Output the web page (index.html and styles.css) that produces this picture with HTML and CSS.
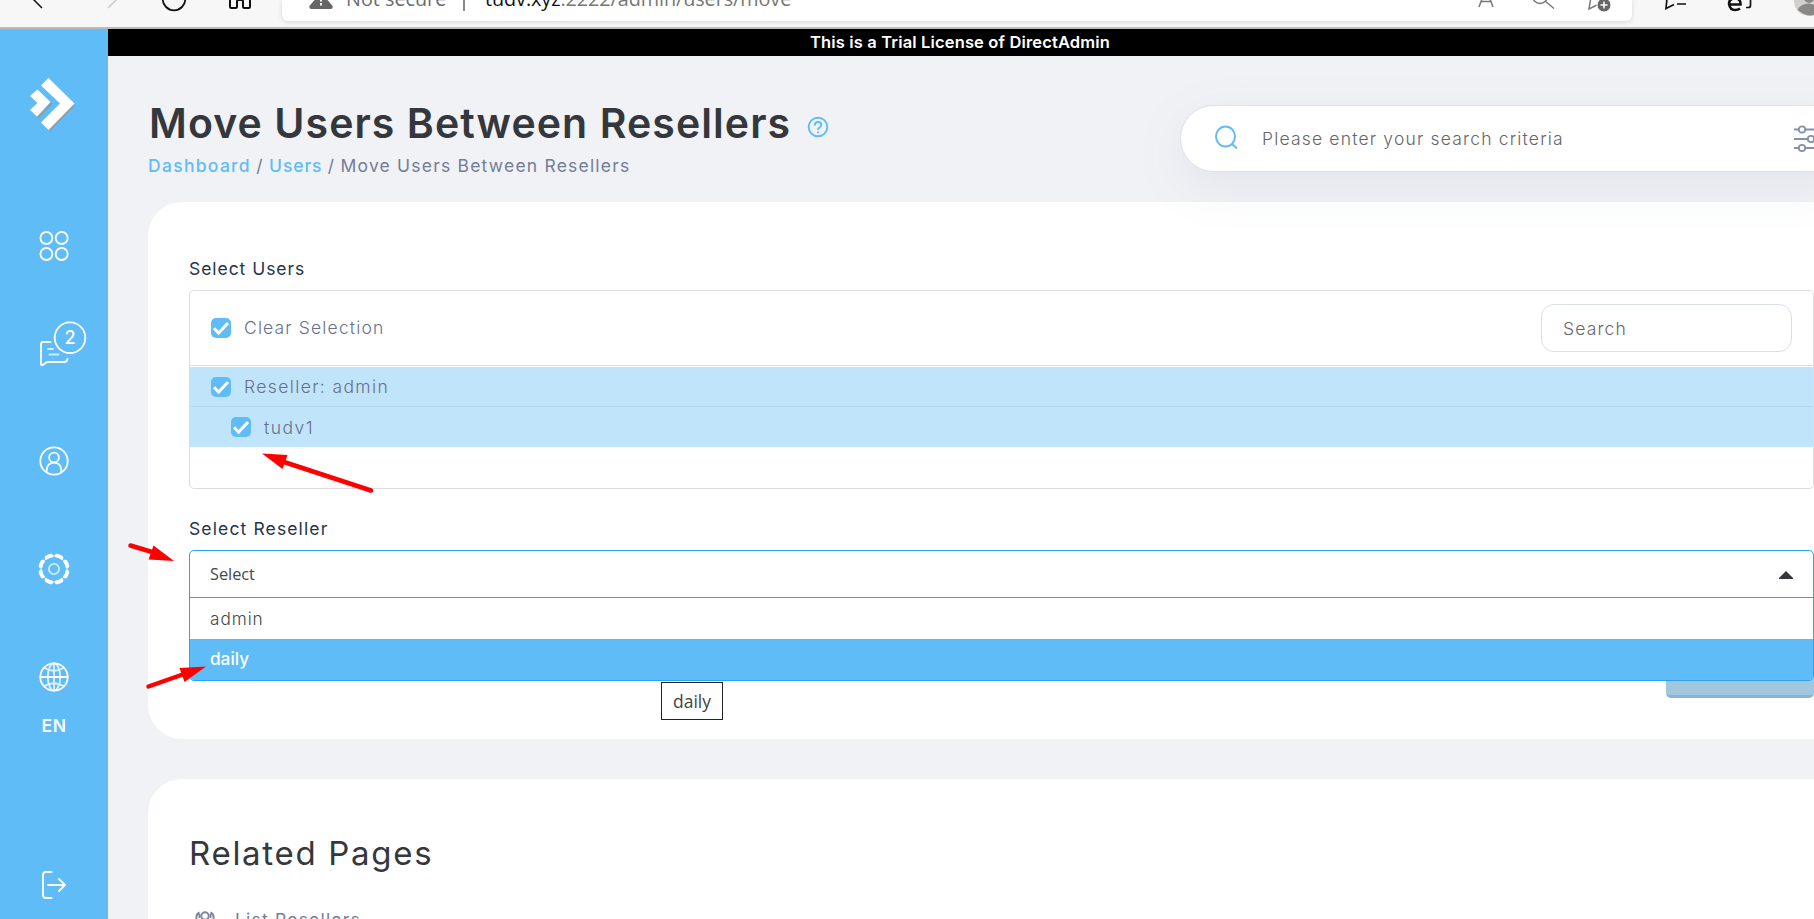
FILE: index.html
```html
<!DOCTYPE html>
<html lang="en">
<head>
<meta charset="utf-8">
<title>Move Users Between Resellers</title>
<link rel="stylesheet" href="styles.css">
</head>
<body>
<div class="browser">
  <svg class="browser-nav" width="282" height="27" viewBox="0 0 282 27" fill="none" stroke-width="1.5">
    <path d="M32 -2L42 8" stroke="#111"/>
    <path d="M118 -2L108 8" stroke="#ccc"/>
    <circle cx="174" cy="-1" r="11.3" stroke="#111" stroke-width="1.8"/>
    <path d="M230 -6V6.5Q230 8 231.500 8H235.500Q237 8 237 6.500V1.500Q237 0 238.500 0H241.500Q243 0 243 1.500V6.500Q243 8 244.500 8H248.500Q250 8 250 6.500V-6" stroke="#111" stroke-width="2"/>
  </svg>
  <div class="address">
    <svg class="warn" width="24" height="9" viewBox="0 0 24 9"><path d="M5.500 0H18.500L23.600 6Q24 9 21.500 9H2.500Q0 9 .4 6Z" fill="#666"/><path d="M12 0V1.500M12 3V5.500" stroke="#fff" stroke-width="2"/></svg>
    <span class="insecure">Not secure</span>
    <span class="divider"></span>
    <span class="url"><b>tudv.xyz</b>:2222/admin/users/move</span>
    <svg class="address-icons" width="140" height="21" viewBox="0 0 140 21" fill="none" stroke="#777" stroke-width="1.5">
      <path d="M3 7L9-9H11L17 7M5 1.500H15"/>
      <circle cx="64" cy="-4" r="7.500"/><path d="M69 1L78 8.500"/>
      <path d="M115-3L113 9L121 5"/><circle cx="128" cy="5" r="7" fill="#666" stroke="#fff" stroke-width="1"/><path d="M128 1.500V8.500M124.500 5H131.500" stroke="#fff"/>
    </svg>
  </div>
  <svg class="browser-tools" width="182" height="27" viewBox="0 0 182 27" fill="none" stroke="#111" stroke-width="1.700">
    <path d="M35-2L34 8.500L42 4.500M45 4H54"/>
    <path d="M114 7.500H116.500Q118.500 7.500 118.500 5.500V-2"/>
    <path d="M98 4.500H108.500Q109-1.500 102.500-1.500Q97-1.500 97 4Q98 10 103 10Q106 10 108 8.500" stroke-width="2.500"/>
    <circle cx="177" cy="1" r="15" fill="#d2d0ce" stroke="none"/><circle cx="177" cy="-2" r="5" fill="#8a8886" stroke="none"/><path d="M165.500 10Q168 4 177 3.500Q184 4 189 10Q180 21 165.500 10Z" fill="#8a8886" stroke="none"/>
  </svg>
</div>
<div class="app">
  <nav class="sidebar">
    <svg class="logo" width="48" height="56" viewBox="0 0 48 56">
      <path d="M13.500 46.500L34 29L46.500 28L20.500 54.500Z M8 41L22 25L23.500 27L9 42Z" fill="#999"/>
      <path d="M19.500 1L45.500 26.500L19.500 53L12 45.500L31 26.500L12 8.500Z M8.500 12.500L21.500 25L8 39.500L1 33L8.500 26L1 19Z" fill="#fff"/>
    </svg>
    <svg class="ico ico-grid" width="32" height="32" viewBox="0 0 32 32"><circle cx="8.400" cy="8" r="6"/><circle cx="23.700" cy="8" r="6"/><circle cx="8.400" cy="24" r="6"/><circle cx="23.700" cy="24" r="6"/></svg>
    <div class="messages">
      <svg class="ico" width="50" height="48" viewBox="0 0 50 48"><path d="M12.500 21H5Q3 21 3 23V42.500Q3 45.500 5.500 43.500L9 41H26Q29 41 29.500 38"/><path d="M10 28H15M11.500 33.500H20.500" opacity=".7" stroke-width="1.900"/><circle cx="32" cy="16.700" r="15.300"/></svg>
      <span class="count">2</span>
    </div>
    <svg class="ico ico-user" width="32" height="32" viewBox="0 0 32 32"><circle cx="16" cy="16" r="13.700"/><circle cx="16" cy="12.500" r="4.900"/><path d="M8.700 27V24.500Q9.500 17.600 16 17.600T23.300 24.500V27"/></svg>
    <svg class="ico ico-gear" width="34" height="34" viewBox="0 0 34 34"><circle cx="17" cy="17" r="13.700" pathLength="80" stroke-width="3.800" stroke-linecap="round" stroke-dasharray="4.500 5.500" stroke-dashoffset="-2.750"/><circle cx="17" cy="17" r="13" pathLength="80" stroke-width="2.200" stroke-linecap="butt" stroke-dasharray="9 1" stroke-dashoffset="-.5"/><circle cx="17" cy="17" r="5.100" opacity=".7"/></svg>
    <svg class="ico ico-globe" width="32" height="32" viewBox="0 0 32 32"><circle cx="16" cy="16" r="13.700"/><g opacity=".8"><ellipse cx="16" cy="16" rx="6.200" ry="13.700"/><path d="M16 2.500V29.500M6.500 7Q16 12.500 25.500 7M6.500 25Q16 19.500 25.500 25"/></g><path d="M2.500 16H29.500"/></svg>
    <span class="lang">EN</span>
    <svg class="ico ico-exit" width="28" height="30" viewBox="0 0 28 30"><path d="M11.500 2H6Q3 2 3 5V25Q3 28 6 28H11.500M8 15H25M19 9L25 15L19 21"/></svg>
  </nav>
  <main class="main">
    <div class="license">This is a Trial License of DirectAdmin</div>
    <header class="header">
      <div class="heading">
        <h1 class="title"><span>Move Users Between Resellers</span>
          <svg width="22" height="22" viewBox="0 0 22 22" fill="none" stroke="#60bcf6" stroke-width="1.900"><circle cx="11" cy="11" r="9.300"/><path d="M7.700 9.500Q7.700 6 11 6T14.300 9Q14.300 10.200 12.800 11.200Q11 12.300 11 14M11 15.500V17.200"/></svg>
        </h1>
        <div class="crumbs"><a class="home">Dashboard</a><i>/</i><a>Users</a><i>/</i><span>Move Users Between Resellers</span></div>
      </div>
      <div class="search">
        <svg class="lens" width="24" height="24" viewBox="0 0 24 24" fill="none" stroke="#60bcf6" stroke-width="2"><ellipse cx="10.500" cy="11.500" rx="9.500" ry="10"/><path d="M16.500 18.500L22 23.500"/></svg>
        <span class="search-text">Please enter your search criteria</span>
        <svg class="filter" width="30" height="28" viewBox="0 0 30 28" fill="none" stroke="#8690ac" stroke-width="1.800"><path d="M0 4.500H5M11 4.500H28M0 14H14M20 14H28M0 23H5M11 23H28"/><circle cx="8" cy="4.500" r="3.200"/><circle cx="17" cy="14" r="3.200"/><circle cx="8" cy="23" r="3.200"/></svg>
      </div>
    </header>
    <section class="card form">
      <div class="label label-users">Select Users</div>
      <div class="list">
        <div class="list-head">
          <svg class="check" viewBox="0 0 20 20"><rect width="20" height="20" rx="5"/><path d="M3 10.200L7.600 15L17 5"/></svg>
          <span class="clear">Clear Selection</span>
          <div class="filter-input">Search</div>
        </div>
        <div class="row"><svg class="check" viewBox="0 0 20 20"><rect width="20" height="20" rx="5"/><path d="M3 10.200L7.600 15L17 5"/></svg><span class="reseller">Reseller: admin</span></div>
        <div class="row child"><svg class="check" viewBox="0 0 20 20"><rect width="20" height="20" rx="5"/><path d="M3 10.200L7.600 15L17 5"/></svg><span class="user">tudv1</span></div>
      </div>
      <div class="label label-reseller">Select Reseller</div>
      <div class="select">
        <div class="select-value"><span>Select</span><svg width="14" height="8" viewBox="0 0 14 8"><path d="M7 0L14 7V8H0V7Z" fill="#34383c"/></svg></div>
        <div class="option"><span class="opt-admin">admin</span></div>
        <div class="option active"><span class="opt-daily">daily</span></div>
        <div class="tooltip">daily</div>
      </div>
      <div class="button"></div>
    </section>
    <section class="card related">
      <h2 class="related-title">Related Pages</h2>
      <div class="link">
        <svg width="20" height="20" viewBox="0 0 20 20" fill="none" stroke="#7c86a2" stroke-width="1.900"><circle cx="10" cy="5" r="3.700"/><path d="M4.500 1.500Q.8 3 1.500 8M15.500 1.500Q19.200 3 18.500 8M4.500 3V7M15.500 3V7M3 17Q4 10 10 10T17 17"/></svg>
        <span>List Resellers</span>
      </div>
    </section>
  </main>
</div>
<svg class="arrows" width="300" height="260" viewBox="100 440 300 260" stroke="#f00" fill="#f00" stroke-width="4.500" stroke-linecap="round">
  <path d="M371 490.500L284 462"/><path d="M262 453.500L287.500 455L282.500 469Z" stroke="none"/>
  <path d="M130.500 545.500L152 552"/><path d="M174 561L153.500 545.500L148.500 559.500Z" stroke="none"/>
  <path d="M148.500 686.500L184 674"/><path d="M206 666.500L179.500 668L184.500 682Z" stroke="none"/>
</svg>
</body>
</html>
```
FILE: styles.css
```css
* { box-sizing: border-box; }
html { overflow: hidden; }
body { margin: 0; width: 1814px; height: 919px; overflow: hidden; position: relative; font-family: Inter, "Liberation Sans", sans-serif; background: #f1f2f6; white-space: nowrap; }
svg { display: block; flex: none; }
.browser { height: 29px; display: flex; background: #f7f7f7; border-bottom: 2px solid #bbb; overflow: hidden; font-family: "Open Sans", "Noto Sans", sans-serif; font-size: 19.800px; }
.address { width: 1350px; height: 21px; display: flex; background: #fff; border-radius: 0 0 6px 6px; box-shadow: 0 1px 5px #0002; padding-left: 27px; line-height: 20px; }
.insecure { margin-left: 13px; margin-top: -11px; width: 117px; color: #6b6b6b; }
.divider { width: 2px; height: 11px; background: #8a8a8a; }
.url { margin: -11px 0 0 20px; flex: 1; color: #767676; letter-spacing: -.06px; }
.url b { font-weight: 400; color: #111; }
.address-icons { margin-right: 16px; }
.app { height: 890px; display: flex; overflow: hidden; }
.sidebar { width: 108px; flex: none; background: #60bcf6; display: flex; flex-direction: column; align-items: center; }
.logo { margin: 48px 0 0 -2px; }
.ico { fill: none; stroke: #fff; stroke-width: 1.8; stroke-linecap: round; }
.ico-grid { margin-top: 97px; }
.messages { position: relative; margin: 59px 0 0 18px; }
.count { position: absolute; left: 17px; top: 1px; width: 30px; text-align: center; line-height: 32px; font-size: 18px; font-weight: 500; color: #fff; }
.ico-user { margin-top: 76px; }
.ico-gear { margin-top: 75px; }
.ico-globe { margin-top: 75px; }
.lang { margin-top: 23px; height: 20px; line-height: 20px; font-size: 17.500px; font-weight: 600; color: #fff; letter-spacing: .5px; }
.ico-exit { margin-top: 134px; }
.main { width: 1747px; flex: none; overflow: hidden; }
.license { width: 1706px; height: 27px; line-height: 27px; background: #000; color: #fff; text-align: center; font-size: 16.500px; font-weight: 600; letter-spacing: .15px; text-indent: -2px; }
.header { height: 146px; padding-left: 41px; display: flex; justify-content: space-between; }
.heading { padding-top: 42px; }
.title { margin: 0; height: 50px; line-height: 50px; font-size: 41px; font-weight: 600; color: #34383d; display: flex; gap: 16px; letter-spacing: 1.080px; }
.title svg { margin-top: 18px; }
.crumbs { display: flex; height: 24px; line-height: 24px; margin-top: 6px; margin-left: -1px; font-size: 17.500px; color: #747d97; letter-spacing: 1.200px; }
.crumbs a { color: #60bcf6; font-weight: 500; letter-spacing: .9px; }
.crumbs .home { letter-spacing: 1.300px; }
.crumbs i { font-style: normal; margin: 0 5.300px; }
.search { position: relative; margin-top: 49px; width: 675px; height: 67px; border: 1px solid #dce1ea; border-radius: 34px; background: #fff; box-shadow: 0 15px 50px rgba(100,120,150,.1); display: flex; align-items: center; padding-left: 34px; }
.lens { margin-top: -3px; }
.search-text { margin-left: 23px; flex: 1; font-size: 17.500px; font-weight: 300; color: #666; letter-spacing: 1.180px; }
.filter { margin-right: 30px; }
.card { margin-left: 40px; background: #fff; border-radius: 34px; padding-left: 41px; padding-right: 41px; }
.form { height: 537px; padding-top: 55px; }
.label { height: 24px; line-height: 24px; font-size: 17.500px; color: #26344b; letter-spacing: .95px; }
.list { margin-top: 9px; height: 199px; border: 1px solid #ddd; border-radius: 5px; font-size: 17.500px; font-weight: 300; color: #69718a; letter-spacing: 1.150px; }
.list-head { height: 75px; border-bottom: 1px solid #ddd; margin-bottom: 1px; padding: 0 21px; display: flex; align-items: center; gap: 13px; }
.clear { padding-bottom: 1px; }
.check { width: 20px; height: 20px; fill: #60bcf6; }
.check path { fill: none; stroke: #fff; stroke-width: 3; }
.filter-input { margin-left: auto; width: 251px; height: 48px; line-height: 47px; border: 1px solid #d9dfe8; border-radius: 13px; padding-left: 21px; color: #666; }
.row { height: 40px; padding: 0 21px; display: flex; align-items: center; gap: 13px; background: #c0e4fa; border-bottom: 1px solid #b2d7ef; }
.child { padding-left: 41px; border: 0; }
.reseller { letter-spacing: 1.380px; }
.user { letter-spacing: 1.500px; }
.label-reseller { margin-top: 28px; letter-spacing: 1.130px; }
.select { position: relative; z-index: 1; margin-top: 9px; height: 131px; border: 1px solid #27a3f2; border-radius: 5px; background: #fff; }
.select-value { height: 47px; border-bottom: 1px solid #27a3f2; padding: 0 20px 1px 20px; display: flex; align-items: center; justify-content: space-between; font-family: "Open Sans", sans-serif; font-size: 16.300px; color: #44484d; }
.select-value svg { margin-top: 2px; }
.option { height: 41px; line-height: 42px; padding-left: 20px; font-size: 17.200px; font-weight: 300; color: #44484d; letter-spacing: .95px; }
.option.active { background: #60bcf6; color: #fff; font-weight: 500; letter-spacing: 0; line-height: 40px; border-radius: 0 0 4px 4px; }
.tooltip { position: absolute; left: 471px; top: 131px; width: 62px; height: 38px; line-height: 37px; text-align: center; border: 1px solid #222; background: #fff; font-family: "Open Sans", sans-serif; font-size: 17.500px; color: #444; }
.button { margin: -31px 0 0 auto; width: 148px; height: 48px; border-radius: 5px; background: #a2c6dc; border-bottom: 3px solid #84b6d8; }
.related { margin-top: 40px; height: 140px; padding-top: 53px; border-radius: 34px 0 0 0; overflow: hidden; }
.related-title { margin: 0; height: 42px; line-height: 42px; font-size: 33px; font-weight: 400; color: #34383d; letter-spacing: 1.700px; }
.link { display: flex; margin: 34px 0 0 6px; height: 24px; line-height: 24px; gap: 20px; font-size: 17.500px; color: #747d97; letter-spacing: 1.200px; }
.link svg { margin-top: 3px; }
.arrows { position: absolute; left: 100px; top: 440px; z-index: 2; }
```
